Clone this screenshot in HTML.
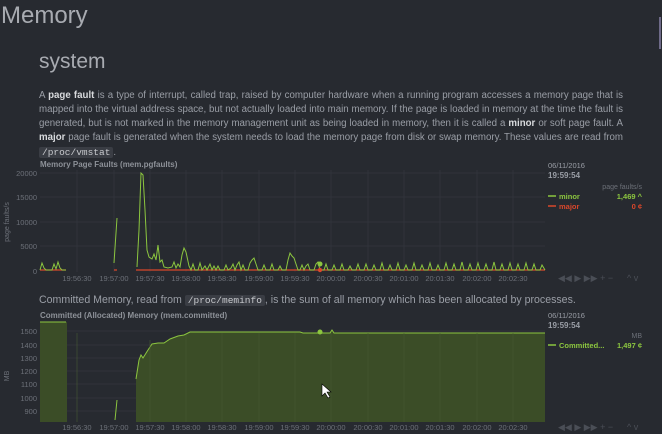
<!DOCTYPE html>
<html><head><meta charset="utf-8"><style>
html,body{margin:0;padding:0;background:#272a30;width:662px;height:434px;overflow:hidden;font-family:"Liberation Sans",sans-serif;color:#9a9ea6}
.a{position:absolute}
h1{position:absolute;left:1px;top:2px;margin:0;font-weight:normal;font-size:24px;color:#a8abb1}
h2{position:absolute;left:39px;top:50px;margin:0;font-weight:normal;font-size:21px;color:#a8abb1}
.p{position:absolute;left:39px;top:89px;width:584px;font-size:9.7px;line-height:13.9px;color:#9a9ea6}
.p div{white-space:nowrap;text-align:justify;text-align-last:justify;height:13.9px}
.p div.l{text-align-last:left;margin-top:1px}
.p b{color:#d8dadd}
code{font-family:"Liberation Mono",monospace;background:#3a3d44;color:#c8cace;padding:0 3px;border-radius:2px;font-size:9.5px}
.t{font-size:8px;font-weight:bold;color:#8d9198}
.scroll{position:absolute;left:659px;top:17px;width:2px;height:32px;background:#6e6a88}
</style></head><body>
<h1>Memory</h1>
<h2>system</h2>
<div class="p">
<div>A <b>page fault</b> is a type of interrupt, called trap, raised by computer hardware when a running program accesses a memory page that is</div>
<div>mapped into the virtual address space, but not actually loaded into main memory. If the page is loaded in memory at the time the fault is</div>
<div>generated, but is not marked in the memory management unit as being loaded in memory, then it is called a <b>minor</b> or soft page fault. A</div>
<div><b>major</b> page fault is generated when the system needs to load the memory page from disk or swap memory. These values are read from</div>
<div class="l"><code>/proc/vmstat</code>.</div>
</div>
<div class="scroll"></div>
<div class="a t" style="left:40px;top:160px">Memory Page Faults (mem.pgfaults)</div>
<div class="a" style="left:39px;top:294px;font-size:10.6px">Committed Memory, read from <code>/proc/meminfo</code>, is the sum of all memory which has been allocated by processes.</div>
<div class="a t" style="left:40px;top:311px">Committed (Allocated) Memory (mem.committed)</div>
<svg class="a" style="left:0;top:0" width="662" height="434" font-family="Liberation Sans" font-size="7.5" fill="#6c7078">
<g stroke="#30333a" stroke-width="1">
<line x1="40" y1="173" x2="545" y2="173"/><line x1="40" y1="197" x2="545" y2="197"/><line x1="40" y1="222" x2="545" y2="222"/><line x1="40" y1="246" x2="545" y2="246"/>
<line x1="77" y1="170" x2="77" y2="272"/><line x1="114" y1="170" x2="114" y2="272"/><line x1="150" y1="170" x2="150" y2="272"/><line x1="186" y1="170" x2="186" y2="272"/><line x1="222" y1="170" x2="222" y2="272"/><line x1="259" y1="170" x2="259" y2="272"/><line x1="295" y1="170" x2="295" y2="272"/><line x1="331" y1="170" x2="331" y2="272"/><line x1="368" y1="170" x2="368" y2="272"/><line x1="404" y1="170" x2="404" y2="272"/><line x1="440" y1="170" x2="440" y2="272"/><line x1="477" y1="170" x2="477" y2="272"/><line x1="513" y1="170" x2="513" y2="272"/>
</g>
<g text-anchor="end"><text x="37" y="176">20000</text><text x="37" y="200">15000</text><text x="37" y="225">10000</text><text x="37" y="249">5000</text><text x="37" y="274">0</text></g>
<text transform="translate(9,222) rotate(-90)" text-anchor="middle" font-size="7">page faults/s</text>
<g text-anchor="middle"><text x="77" y="281">19:56:30</text><text x="114" y="281">19:57:00</text><text x="150" y="281">19:57:30</text><text x="186" y="281">19:58:00</text><text x="222" y="281">19:58:30</text><text x="259" y="281">19:59:00</text><text x="295" y="281">19:59:30</text><text x="331" y="281">20:00:00</text><text x="368" y="281">20:00:30</text><text x="404" y="281">20:01:00</text><text x="440" y="281">20:01:30</text><text x="477" y="281">20:02:00</text><text x="513" y="281">20:02:30</text></g>
<path d="M40 270H66M136 270H545M114 270H117" stroke="#d9472b" stroke-width="1.3"/>
<path fill="none" stroke="#8cc63f" stroke-width="1" d="M40 270L42 263L44 268L46 270L52 270L54 264L56 269L58 262L60 268L62 270L66 270 M114 263L117 218 M137 267L139 230L141 173L143 175L145 210L147 250L149 257L152 259L154 254L156 260L158 245L160 262L162 260L164 267L168 268L172 267L174 262L176 268L178 264L180 267L182 255L184 248L186 252L189 266L191 270L193 264L195 270L198 270L200 263L202 270L205 266L207 270L210 264L212 270L214 266L216 270L218 266L220 270L224 270L226 265L228 270L231 268L233 264L235 270L237 265L239 262L241 270L243 265L245 270L248 270L250 263L252 260L254 258L256 264L258 270L262 270L264 265L266 270L270 270L272 264L274 270L278 270L280 266L282 270L286 270L288 260L290 253L292 256L294 258L296 264L298 270L300 270L302 265L304 270L306 266L308 264L310 270L314 270L316 264L318 262L320 270L324 270L326 264L328 270L332 270L334 265L336 270L340 270L342 264L344 270L348 270L350 266L352 270L356 270L358 264L360 270L364 270L366 264L368 270L372 270L374 265L376 270L380 270L382 263L384 270L388 270L390 265L392 270L396 270L398 263L400 270L404 270L406 265L408 270L412 270L414 263L416 270L420 270L422 265L424 270L428 270L430 263L432 270L436 270L438 265L440 270L444 270L446 263L448 270L452 270L454 264L456 270L460 270L462 262L464 270L468 270L470 264L472 270L476 270L478 263L480 270L484 270L486 264L488 270L492 270L494 262L496 270L500 270L502 264L504 270L508 270L510 263L512 270L516 270L518 264L520 270L524 270L526 263L528 270L532 270L534 264L536 270L540 270L542 265L545 270"/>
<circle cx="320" cy="264" r="2.5" fill="#8cc63f"/><circle cx="320" cy="270" r="2.2" fill="#d9472b"/>
<g stroke="#30333a"><line x1="40" y1="331" x2="545" y2="331"/><line x1="40" y1="345" x2="545" y2="345"/><line x1="40" y1="358" x2="545" y2="358"/><line x1="40" y1="371" x2="545" y2="371"/><line x1="40" y1="384" x2="545" y2="384"/><line x1="40" y1="398" x2="545" y2="398"/><line x1="40" y1="411" x2="545" y2="411"/></g>
<path fill="#3b4d27" d="M40 322H67V422H40Z M136 422L136 379L139 360L141 355L143 358L148 350L152 344L158 343L164 343L170 339L178 336L184 335L190 332L300 332L303 333L330 333L332 330L334 333L545 333V422Z"/>
<path fill="none" stroke="#8cc63f" stroke-width="1" d="M40 322H66 M115 420L117 400 M136 379L139 360L141 355L143 358L148 350L152 344L158 343L164 343L170 339L178 336L184 335L190 332L300 332L303 333L330 333L332 330L334 333L545 333"/>
<g stroke="#485a34" stroke-opacity=".6"><line x1="77" y1="333" x2="77" y2="422"/><line x1="150" y1="340" x2="150" y2="422"/><line x1="186" y1="335" x2="186" y2="422"/><line x1="222" y1="333" x2="222" y2="422"/><line x1="259" y1="333" x2="259" y2="422"/><line x1="295" y1="333" x2="295" y2="422"/><line x1="331" y1="333" x2="331" y2="422"/><line x1="368" y1="333" x2="368" y2="422"/><line x1="404" y1="333" x2="404" y2="422"/><line x1="440" y1="333" x2="440" y2="422"/><line x1="477" y1="333" x2="477" y2="422"/><line x1="513" y1="333" x2="513" y2="422"/></g>
<circle cx="320" cy="332" r="2.5" fill="#8cc63f"/>
<g text-anchor="end"><text x="37" y="334">1500</text><text x="37" y="348">1400</text><text x="37" y="361">1300</text><text x="37" y="374">1200</text><text x="37" y="387">1100</text><text x="37" y="401">1000</text><text x="37" y="414">900</text></g>
<text transform="translate(9,376) rotate(-90)" text-anchor="middle" font-size="7">MB</text>
<g text-anchor="middle"><text x="77" y="430">19:56:30</text><text x="114" y="430">19:57:00</text><text x="150" y="430">19:57:30</text><text x="186" y="430">19:58:00</text><text x="222" y="430">19:58:30</text><text x="259" y="430">19:59:00</text><text x="295" y="430">19:59:30</text><text x="331" y="430">20:00:00</text><text x="368" y="430">20:00:30</text><text x="404" y="430">20:01:00</text><text x="440" y="430">20:01:30</text><text x="477" y="430">20:02:00</text><text x="513" y="430">20:02:30</text></g>
<path d="M322 384L322 396L325 393L328 398L330 397L327 392L331 392Z" fill="#fff" stroke="#000" stroke-width=".6"/>
<g font-size="7.5" fill="#9a9ea6"><text x="548" y="168">06/11/2016</text><text x="548" y="178" font-weight="bold" font-size="8">19:59:54</text>
<text x="548" y="318">06/11/2016</text><text x="548" y="328" font-weight="bold" font-size="8">19:59:54</text></g>
<text x="642" y="189" text-anchor="end" font-size="7">page faults/s</text>
<text x="642" y="338" text-anchor="end" font-size="7">MB</text>
<g font-size="7.5" font-weight="bold"><line x1="548" y1="196" x2="556" y2="196" stroke="#8cc63f" stroke-width="1.5"/><text x="559" y="199" fill="#8cc63f">minor</text><text x="642" y="199" text-anchor="end" fill="#8cc63f">1,469 ^</text>
<line x1="548" y1="206" x2="556" y2="206" stroke="#d9472b" stroke-width="1.5"/><text x="559" y="209" fill="#d9472b">major</text><text x="642" y="209" text-anchor="end" fill="#d9472b">0 ¢</text>
<line x1="548" y1="345" x2="556" y2="345" stroke="#8cc63f" stroke-width="1.5"/><text x="559" y="348" fill="#8cc63f">Committed...</text><text x="642" y="348" text-anchor="end" fill="#8cc63f">1,497 ¢</text></g>
<g fill="#4a4e56" font-size="9"><text x="558" y="281">◀◀ ▶ ▶▶ + −</text><text x="627" y="281">^ v</text><text x="558" y="430">◀◀ ▶ ▶▶ + −</text><text x="627" y="430">^ v</text></g>
</svg>
</body></html>
